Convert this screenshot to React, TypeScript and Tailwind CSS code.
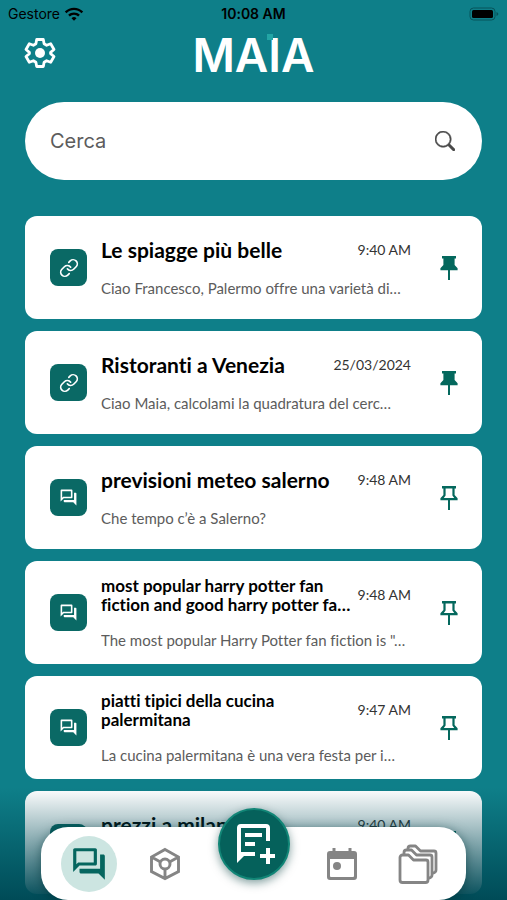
import { useState } from 'react';
import { Link } from 'lucide-react';
import { BsSearch } from 'react-icons/bs';
import { MdOutlineForum, MdWifi } from 'react-icons/md';

type Chat = {
  id: number;
  titolo: string;
  anteprima: string;
  ora: string;
  tipo: 'link' | 'chat';
  fissata: boolean;
  compatta?: boolean;
};

const chats: Chat[] = [
  { id: 1, titolo: 'Le spiagge più belle', anteprima: 'Ciao Francesco, Palermo offre una varietà di…', ora: '9:40 AM', tipo: 'link', fissata: true },
  { id: 2, titolo: 'Ristoranti a Venezia', anteprima: 'Ciao Maia, calcolami la quadratura del cerc…', ora: '25/03/2024', tipo: 'link', fissata: true },
  { id: 3, titolo: 'previsioni meteo salerno', anteprima: 'Che tempo c’è a Salerno?', ora: '9:48 AM', tipo: 'chat', fissata: false },
  { id: 4, titolo: 'most popular harry potter fan fiction and good harry potter fa…', anteprima: 'The most popular Harry Potter fan fiction is "…', ora: '9:48 AM', tipo: 'chat', fissata: false, compatta: true },
  { id: 5, titolo: 'piatti tipici della cucina palermitana', anteprima: 'La cucina palermitana è una vera festa per i…', ora: '9:47 AM', tipo: 'chat', fissata: false, compatta: true },
  { id: 6, titolo: 'prezzi a milano', anteprima: 'I prezzi a Milano', ora: '9:40 AM', tipo: 'chat', fissata: false },
];

function PinIcon({ piena }: { piena: boolean }) {
  return (
    <svg viewBox="0 0 18 24" className="h-6 w-[18px]" fill="currentColor">
      <path
        fillRule="evenodd"
        d={piena
          ? 'M2 0h14v2.400h-1.400v6.600l3 3.200v2H10V24H8v-9.800H.400v-2l3-3.200V2.400H2z'
          : 'M2 0h14v2.400h-1.400v6.600l3 3.200v2H10V24H8v-9.800H.400v-2l3-3.200V2.400H2zM5.600 2.400v7.200L3.800 12h10.400l-1.800-2.400V2.400z'}
      />
    </svg>
  );
}

function ChatCard({ chat }: { chat: Chat }) {
  const [fissata, setFissata] = useState(chat.fissata);

  return (
    <li className="flex h-[103px] shrink-0 items-center rounded-xl bg-white pl-[25px] pr-6">
      <span className="flex size-[37px] shrink-0 items-center justify-center rounded-lg bg-[#0a6965] text-white">
        {chat.tipo === 'link' ? <Link className="size-5" strokeWidth={2} /> : <MdOutlineForum className="size-[19px]" />}
      </span>
      <div className="ml-[14px] min-w-0 flex-1 self-start pt-[14px]">
        <div className="flex h-10 items-center justify-between">
          <h2 className={chat.compatta ? 'w-[250px] text-[17px] leading-[19px] font-bold' : 'text-[21px] font-bold'}>{chat.titolo}</h2>
          <time className="shrink-0 text-sm text-[#333]">{chat.ora}</time>
        </div>
        <p className={`${chat.compatta ? 'mt-[15px]' : 'mt-2'} truncate text-[15px] leading-5 text-[#5c5c5c]`}>{chat.anteprima}</p>
      </div>
      <button
        type="button"
        aria-label="Fissa chat"
        onClick={() => setFissata(!fissata)}
        className="ml-[29px] shrink-0 text-[#04685d]"
      >
        <PinIcon piena={fissata} />
      </button>
    </li>
  );
}

export default function App() {
  const [cerca, setCerca] = useState('');

  return (
    <div className="relative flex h-screen flex-col overflow-hidden bg-[#0e7f89] font-['Lato',sans-serif] text-black [font-variant-ligatures:none]">
      {/* Barra di stato */}
      <div className="grid h-7 shrink-0 grid-cols-3 items-center px-2 font-['Inter',sans-serif] text-sm">
        <span className="flex items-center gap-1">Gestore <MdWifi className="size-5" /></span>
        <span className="text-center font-semibold">10:08 AM</span>
        <svg viewBox="0 0 30 14" className="h-[14px] w-[30px] justify-self-end">
          <rect x="1" y="1" width="25" height="12" rx="3.5" fill="none" stroke="#07545b" />
          <rect x="3" y="3" width="21" height="8" rx="1.5" fill="#000" />
          <path d="M27.5 5v4c1.2-.5 1.8-1.2 1.8-2s-.6-1.500-1.800-2z" fill="#07545b" />
        </svg>
      </div>

      <header className="grid h-[50px] shrink-0 grid-cols-3 items-center px-6">
        <button type="button" aria-label="Impostazioni" className="size-8 text-white">
          <svg viewBox="0 0 32 32" className="size-8" fill="none" stroke="currentColor" strokeWidth="2.800" strokeLinejoin="round">
            <path d="M12.700 2.500h6.600l.8 4.300 2.500 1.500 4.100-1.500 3.300 5.700-3.400 2.800v1.400l3.400 2.800-3.300 5.700-4.100-1.500-2.500 1.500-.8 4.300h-6.600l-.8-4.300-2.500-1.500-4.100 1.500L2 19.500l3.400-2.800v-1.400L2 12.500l3.300-5.700 4.100 1.500 2.500-1.500z" />
            <circle cx="16" cy="16" r="5" fill="currentColor" stroke="none" />
          </svg>
        </button>
        <h1 className="relative mt-1 justify-self-center font-['Inter',sans-serif] text-[46px] leading-none font-semibold text-white">
          MAIA
          <span className="absolute top-0.5 right-[42px] size-[6px] bg-[#23a5a5]" />
        </h1>
      </header>

      <main className="flex min-h-0 flex-1 flex-col overflow-y-auto px-[25px] pt-6 [scrollbar-width:none]">
        <label className="flex h-[78px] shrink-0 items-center rounded-full bg-white pl-[25px] pr-[27px]">
          <input
            type="text"
            aria-label="Cerca"
            placeholder="Cerca"
            value={cerca}
            onChange={(e) => setCerca(e.target.value)}
            className="min-w-0 flex-1 font-['Inter',sans-serif] text-xl outline-none placeholder:text-[#5c5c5c]"
          />
          <BsSearch className="size-5 stroke-[0.4] text-[#4a4a4a]" />
        </label>

        <ul className="mt-9 flex flex-col gap-3">
          {chats
            .filter((chat) => chat.titolo.toLowerCase().includes(cerca.toLowerCase()))
            .map((chat) => <ChatCard key={chat.id} chat={chat} />)}
        </ul>
      </main>

      {/* Sfumatura sotto la barra di navigazione */}
      <div className="pointer-events-none absolute inset-x-0 bottom-0 h-28 bg-linear-to-b from-transparent to-[#004b57]" />

      <nav className="absolute inset-x-[41px] bottom-0 flex h-[73px] items-center rounded-[27px] bg-white px-5 text-[#858585] shadow-[0_2px_12px_rgba(0,50,55,0.6)]">
        <a href="#chat" aria-label="Chat" className="flex size-14 items-center justify-center rounded-full bg-[#cce5e1] text-[#05665f]">
          <MdOutlineForum className="size-[38px]" />
        </a>
        <a href="#modelli" aria-label="Modelli" className="ml-8">
          <svg viewBox="0 0 32 34" className="h-[34px] w-8" fill="none" stroke="currentColor" strokeWidth="2.900">
            <path d="M16 2.500 29.500 10v14.500L16 31.500 2.500 24.500V10zM2.500 10l9 5M29.500 10l-9 5M16 22v9.500" />
            <circle cx="16" cy="17" r="5" />
          </svg>
        </a>
        <a href="#calendario" aria-label="Calendario" className="ml-auto">
          <svg viewBox="0 0 32 34" className="h-[34px] w-8">
            <path d="M6.500 1h3v3h13V1h3v3H28a3 3 0 0 1 3 3v23a3 3 0 0 1-3 3H4a3 3 0 0 1-3-3V7a3 3 0 0 1 3-3h2.500zM4 12v17a1 1 0 0 0 1 1h22a1 1 0 0 0 1-1V12z" fill="currentColor" fillRule="evenodd" />
            <circle cx="11" cy="19" r="4" fill="currentColor" />
          </svg>
        </a>
        <a href="#cartelle" aria-label="Cartelle" className="ml-10 mr-2">
          <svg viewBox="0 0 40 40" className="size-10" fill="none" stroke="currentColor" strokeWidth="2.800" strokeLinejoin="round">
            <path d="M10 6V4.500A2.500 2.500 0 0 1 12.500 2h5l5 5H36a2 2 0 0 1 2 2v17a3 3 0 0 1-3 3" />
            <path d="M6 11V8.500A2.500 2.500 0 0 1 8.500 6h5l5 5H32a2 2 0 0 1 2 2v18a3 3 0 0 1-3 3" />
            <path d="M4.500 11h6l5 5H28a2 2 0 0 1 2 2v18a2.500 2.500 0 0 1-2.500 2.500h-23A2.500 2.500 0 0 1 2 36V13.500A2.500 2.500 0 0 1 4.500 11z" />
          </svg>
        </a>
        <button
          type="button"
          aria-label="Nuova chat"
          className="absolute bottom-5 left-1/2 flex size-[72px] -translate-x-1/2 items-center justify-center rounded-full border-2 border-[#118576] bg-[#05615b] text-white shadow-[0_3px_10px_rgba(0,60,60,0.5)]"
        >
          <svg viewBox="0 0 42 42" className="size-[42px]" fill="none" stroke="currentColor" strokeWidth="4">
            <path d="M35 18V5a2 2 0 0 0-2-2H8a2 2 0 0 0-2 2v28M22 31H6" />
            <path d="M4 29v11l7-7z" fill="currentColor" stroke="none" />
            <path d="M12 12h17M12 21h10M35 25v16M27 33h16" />
          </svg>
        </button>
      </nav>
    </div>
  );
}
